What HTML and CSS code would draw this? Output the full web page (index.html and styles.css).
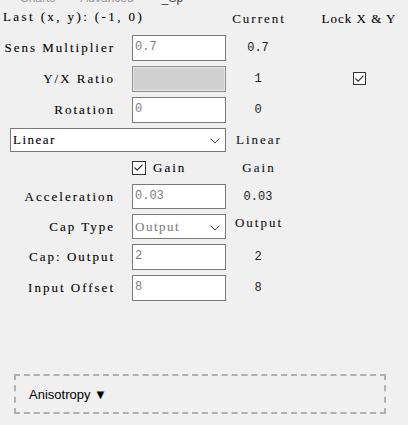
FILE: index.html
```html
<!DOCTYPE html>
<html>
<head>
<meta charset="utf-8">
<link rel="stylesheet" href="styles.css">
</head>
<body>
<div class="tabs"><div class="tabs-inner"><span class="tab t1">Charts</span><span class="tab t2">Advanced</span><span class="tab t3">_Sp</span></div></div>
<div class="panel">
  <div class="last serif">Last (x, y): (-1, 0)</div>
  <div class="cur hdr serif">Current</div>
  <div class="lock hdr serif">Lock X &amp; Y</div>

  <div class="lbl serif">Sens Multiplier</div>
  <div class="field">0.7</div>
  <div class="cur">0.7</div>
  <div></div>

  <div class="lbl serif">Y/X Ratio</div>
  <div class="field disabled"></div>
  <div class="cur">1</div>
  <div class="lock"><span class="cb"><svg viewBox="0 0 13 13" width="13" height="13"><path d="M2.5 6.5 L5.2 9.2 L10.5 3.6" fill="none" stroke="#333" stroke-width="1.2"/></svg></span></div>

  <div class="lbl serif">Rotation</div>
  <div class="field">0</div>
  <div class="cur">0</div>
  <div></div>

  <div class="select wide"><span class="sel-text dark serif">Linear</span><svg class="chev" viewBox="0 0 10 6" width="10" height="6"><path d="M0.5 0.5 L5 5 L9.5 0.5" fill="none" stroke="#444" stroke-width="1"/></svg></div>
  <div class="cur serif">Linear</div>
  <div></div>

  <div></div>
  <div class="gain"><span class="cb"><svg viewBox="0 0 13 13" width="13" height="13"><path d="M2.5 6.5 L5.2 9.2 L10.5 3.6" fill="none" stroke="#333" stroke-width="1.2"/></svg></span><span class="gain-text serif">Gain</span></div>
  <div class="cur serif">Gain</div>
  <div></div>

  <div class="lbl serif">Acceleration</div>
  <div class="field">0.03</div>
  <div class="cur">0.03</div>
  <div></div>

  <div class="lbl serif">Cap Type</div>
  <div class="select"><span class="sel-text serif">Output</span><svg class="chev" viewBox="0 0 10 6" width="10" height="6"><path d="M0.5 0.5 L5 5 L9.5 0.5" fill="none" stroke="#444" stroke-width="1"/></svg></div>
  <div class="cur top serif">Output</div>
  <div></div>

  <div class="lbl serif">Cap: Output</div>
  <div class="field">2</div>
  <div class="cur">2</div>
  <div></div>

  <div class="lbl serif">Input Offset</div>
  <div class="field">8</div>
  <div class="cur">8</div>
  <div></div>
</div>
<div class="aniso"><span class="aniso-text">Anisotropy ▼</span></div>
</body>
</html>
```
FILE: styles.css
```css
html, body {
  margin: 0;
  padding: 0;
  background: #f0f0f0;
  width: 408px;
  height: 425px;
  overflow: hidden;
}
body {
  font-family: "Liberation Mono", "DejaVu Sans Mono", monospace;
  font-size: 12px;
  color: #000;
}
.serif {
  font-family: "Liberation Serif", "DejaVu Serif", serif;
  font-size: 13px;
  letter-spacing: 2px;
  -webkit-text-stroke: 0.1px currentColor;
}
.tabs {
  height: 6px;
  overflow: hidden;
  position: relative;
}
.tabs-inner {
  display: flex;
  margin-top: -9px;
  height: 15px;
  line-height: 15px;
  font-family: "Liberation Sans", sans-serif;
  font-size: 12px;
  color: #9a9a9a;
}
.tab.t1 { margin-left: 20px; }
.tab.t2 { margin-left: 25px; }
.tab.t3 { margin-left: 28px; color: #444; }
.panel {
  display: grid;
  grid-template-columns: 132px 94px 64px 1fr;
  grid-template-rows: 24px 26px 26px 26px 24px 22px 25px 25px 26px 26px;
  row-gap: 5px;
}
.last {
  grid-column: 1 / 3;
  align-self: center;
  padding-left: 3px;
  margin-top: -2px;
  letter-spacing: 2.4px;
}
.cur {
  align-self: center;
  text-align: center;
  color: #222;
}
.cur.serif {
  color: #111;
  padding-left: 2px;
}
.cur.top {
  align-self: start;
  padding-top: 1px;
}
.hdr {
  padding-top: 2px;
}
.lock {
  align-self: center;
  padding-left: 20px;
  text-align: center;
}
.lock.serif {
  letter-spacing: 1px;
}
.lbl {
  align-self: center;
  text-align: right;
  padding-right: 17px;
}
.field {
  box-sizing: border-box;
  border: 1px solid #7a7a7a;
  background: #fff;
  color: #7d7d7d;
  padding: 3px 2px 0;
  line-height: 16px;
}
.field.disabled {
  background: #d0d0d0;
  border-color: #8e8e8e;
  box-shadow: inset 0 0 0 1px #e6e6e6;
}
.select {
  box-sizing: border-box;
  border: 1px solid #7a7a7a;
  background: #fff;
  display: flex;
  align-items: center;
  justify-content: space-between;
  padding: 0 5px 0 2px;
  color: #7d7d7d;
}
.select.wide {
  grid-column: 1 / 3;
  margin-left: 10px;
}
.sel-text {
  letter-spacing: 1.5px;
}
.sel-text.dark {
  color: #000;
}
.chev {
  display: block;
  margin-top: 2px;
}
.cb {
  display: inline-block;
  box-sizing: border-box;
  width: 13px;
  height: 13px;
  border: 1px solid #333;
  background: #fff;
  vertical-align: middle;
}
.cb svg {
  display: block;
  margin: -1px;
}
.gain {
  display: flex;
  align-items: center;
  gap: 7px;
}
.gain .cb {
  width: 14px;
  height: 14px;
}
.aniso {
  box-sizing: border-box;
  margin: 73px 0 0 14px;
  width: 372px;
  height: 40px;
  border: 2px dashed #b0b0b0;
  display: flex;
  align-items: center;
  padding-left: 13px;
}
.aniso-text {
  font-family: "Liberation Sans", Arial, sans-serif;
  font-size: 13px;
  color: #000;
}
```
